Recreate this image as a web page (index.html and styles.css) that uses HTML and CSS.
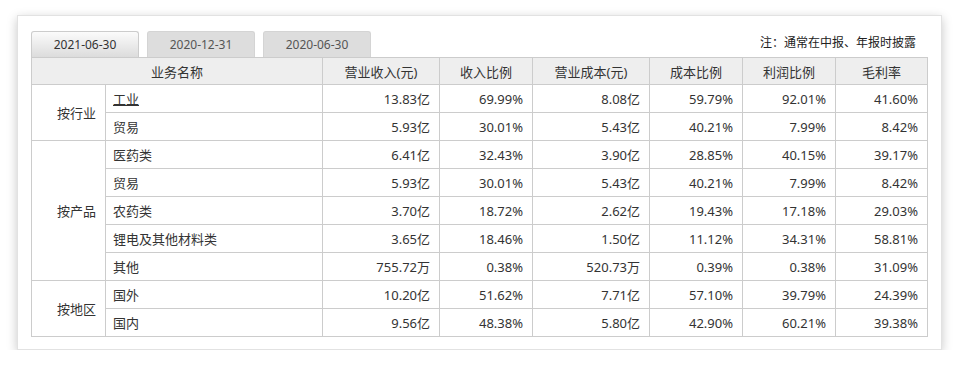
FILE: index.html
```html
<!DOCTYPE html>
<html>
    <head>
        <title>主营构成</title>
        <link rel="stylesheet" href="styles.css">
    </head>
    <body>
        <div class="panel">
            <div class="tab-bar">
                <div class="tab tab-active">2021-06-30</div>
                <div class="tab">2020-12-31</div>
                <div class="tab">2020-06-30</div>
                <p class="note">注：通常在中报、年报时披露</p>
            </div>
            <table class="main-table">
                <colgroup>
                    <col class="col-group">
                    <col class="col-name">
                    <col class="col-money">
                    <col class="col-rate">
                    <col class="col-money">
                    <col class="col-rate">
                    <col class="col-rate">
                    <col class="col-last">
                </colgroup>
                <thead>
                    <tr>
                        <th colspan="2">业务名称</th>
                        <th>营业收入(元)</th>
                        <th>收入比例</th>
                        <th>营业成本(元)</th>
                        <th>成本比例</th>
                        <th>利润比例</th>
                        <th>毛利率</th>
                    </tr>
                </thead>
                <tbody>
                    <tr>
                        <td rowspan="2" class="group">按行业</td>
                        <td class="name"><a class="name-link">工业</a></td>
                        <td>13.83亿</td><td>69.99%</td><td>8.08亿</td><td>59.79%</td><td>92.01%</td><td>41.60%</td>
                    </tr>
                    <tr>
                        <td class="name">贸易</td>
                        <td>5.93亿</td><td>30.01%</td><td>5.43亿</td><td>40.21%</td><td>7.99%</td><td>8.42%</td>
                    </tr>
                    <tr>
                        <td rowspan="5" class="group">按产品</td>
                        <td class="name">医药类</td>
                        <td>6.41亿</td><td>32.43%</td><td>3.90亿</td><td>28.85%</td><td>40.15%</td><td>39.17%</td>
                    </tr>
                    <tr>
                        <td class="name">贸易</td>
                        <td>5.93亿</td><td>30.01%</td><td>5.43亿</td><td>40.21%</td><td>7.99%</td><td>8.42%</td>
                    </tr>
                    <tr>
                        <td class="name">农药类</td>
                        <td>3.70亿</td><td>18.72%</td><td>2.62亿</td><td>19.43%</td><td>17.18%</td><td>29.03%</td>
                    </tr>
                    <tr>
                        <td class="name">锂电及其他材料类</td>
                        <td>3.65亿</td><td>18.46%</td><td>1.50亿</td><td>11.12%</td><td>34.31%</td><td>58.81%</td>
                    </tr>
                    <tr>
                        <td class="name">其他</td>
                        <td>755.72万</td><td>0.38%</td><td>520.73万</td><td>0.39%</td><td>0.38%</td><td>31.09%</td>
                    </tr>
                    <tr>
                        <td rowspan="2" class="group">按地区</td>
                        <td class="name">国外</td>
                        <td>10.20亿</td><td>51.62%</td><td>7.71亿</td><td>57.10%</td><td>39.79%</td><td>24.39%</td>
                    </tr>
                    <tr>
                        <td class="name">国内</td>
                        <td>9.56亿</td><td>48.38%</td><td>5.80亿</td><td>42.90%</td><td>60.21%</td><td>39.38%</td>
                    </tr>
                </tbody>
            </table>
        </div>
    </body>
</html>
```

FILE: styles.css
```css
body {
    margin: 0;
    background-color: #ffffff;
    color: #333333;
    font-family: "Noto Sans", "Noto Sans CJK SC", sans-serif;
    font-size: 13px;
}

.panel {
    width: 896px;
    height: 305px;
    margin: 15px 0 0 17px;
    padding: 15px 14px 13px 13px;
    background-color: #ffffff;
    border: 1px solid #e2e2e2;
    box-shadow: 0 3px 10px rgba(0, 0, 0, 0.22);
}

.tab-bar {
    display: flex;
    align-items: flex-end;
    gap: 8px;
    height: 26px;
}

.tab {
    width: 106px;
    height: 25px;
    line-height: 25px;
    text-align: center;
    font-size: 12px;
    color: #555555;
    background-color: #dddddd;
    border: 1px solid #d4d4d4;
    border-bottom: none;
    border-radius: 3px 3px 0 0;
}

.tab-active {
    color: #333333;
    background: linear-gradient(#fbfbfb, #dcdcdc);
    border-color: #cccccc;
}

.note {
    margin: 0 11px 0 auto;
    align-self: flex-start;
    padding-top: 2px;
    font-size: 12px;
    color: #222222;
}

.main-table {
    width: 896px;
    border-collapse: collapse;
    table-layout: fixed;
}

.col-group {
    width: 74px;
}

.col-name {
    width: 217px;
}

.col-money {
    width: 117px;
}

.col-rate {
    width: 93px;
}

.col-last {
    width: 92px;
}

.main-table th {
    height: 26px;
    padding: 0;
    font-weight: normal;
    background-color: #eeeeee;
    border: 1px solid #cccccc;
    color: #333333;
}

.main-table td {
    height: 27px;
    padding: 0 9px 0 8px;
    text-align: right;
    border: 1px solid #cccccc;
    white-space: nowrap;
}

.main-table td.name {
    text-align: left;
    padding-left: 7px;
}

.main-table td.group {
    padding-right: 9px;
}

.name-link {
    color: #333333;
    text-decoration: underline;
}
```
